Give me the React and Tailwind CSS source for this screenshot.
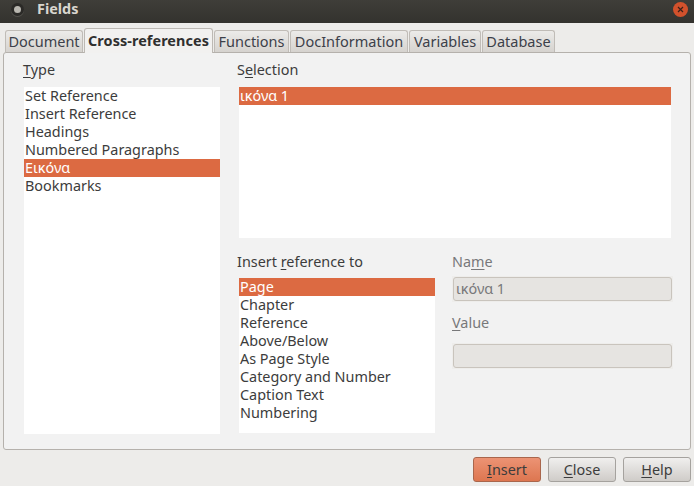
const font = { fontFamily: '"Noto Sans", "Open Sans", sans-serif' };

function U({ children }) {
  return <span className="underline decoration-1 underline-offset-2">{children}</span>;
}

function Tab({ children, active, w }) {
  return active ? (
    <div className={"h-[25px] -mt-[2px] mb-[-1px] relative z-10 flex items-center justify-center bg-[#f2f1f0] border border-b-0 border-[#bdb9b4] rounded-t-[3px] font-bold text-[#2f2f2f] text-[14.4px] tracking-[0.08px] " + w}>
      {children}
    </div>
  ) : (
    <div className={"h-[22px] flex items-center justify-center bg-gradient-to-b from-[#ecebe9] to-[#d6d3cf] border border-b-0 border-[#c0bcb7] rounded-t-[3px] text-[#3c4049] text-[14.5px] " + w}>
      {children}
    </div>
  );
}

function ListBox({ items, selected, className }) {
  return (
    <div className={"bg-white text-[14.4px] leading-[18px] text-[#3c3c3c] " + className}>
      {items.map((t, i) => (
        <div key={i} className={"h-[18px] pl-px whitespace-nowrap " + (i === selected ? "bg-[#dc6a42] text-white" : "")}>
          {t}
        </div>
      ))}
    </div>
  );
}

function Btn({ children, primary }) {
  return (
    <div
      className={
        "w-[68px] h-[25px] flex items-center justify-center rounded-[3px] border text-[14.4px] " +
        (primary
          ? "border-[#a9664c] bg-gradient-to-b from-[#ec9374] to-[#dd7650] text-[#3c3c3c]"
          : "border-[#a5a29e] bg-gradient-to-b from-[#f0efee] to-[#cfccc8] text-[#3c3c3c]")
      }
    >
      <span>{children}</span>
    </div>
  );
}

function Field({ children }) {
  return (
    <div className="h-[26px] p-px bg-[#eeedeb]">
      <div className="h-full bg-[#e6e4e1] border border-[#c9c4bd] rounded-[3px] flex items-center pl-[2px]">{children}</div>
    </div>
  );
}

export default function App() {
  return (
    <div style={font} className="w-[694px] h-[486px] bg-[#edecea] overflow-hidden flex flex-col">
      <div className="h-[23px] shrink-0 bg-gradient-to-b from-[#3f3e39] to-[#33322e] flex items-start justify-between pl-[11px] pr-[6px] pt-[2px]">
        <div className="flex items-center gap-[13px] h-[15px]">
          <div className="w-[13px] h-[13px] rounded-full bg-[#2b2a27] flex items-center justify-center shadow-[0_1px_0_#55544f]">
            <div className="w-[7px] h-[7px] rounded-full bg-[#b9b7b0]" />
          </div>
          <span className="text-[14.4px] font-bold text-[#d9d6ce] leading-none">Fields</span>
        </div>
        <div className="w-[15px] h-[15px] rounded-full bg-[#d2512c] flex items-center justify-center">
          <svg width="7" height="7" viewBox="0 0 7 7">
            <path d="M1 1 L6 6 M6 1 L1 6" stroke="#3a2018" strokeWidth="1.2" />
          </svg>
        </div>
      </div>

      <div className="flex pl-[5px] pt-[7px] gap-px h-[29px] shrink-0 items-start">
        <Tab w="w-[78px]">Document</Tab>
        <Tab active w="w-[129px]">Cross-references</Tab>
        <Tab w="w-[75px]">Functions</Tab>
        <Tab w="w-[118px]">DocInformation</Tab>
        <Tab w="w-[72px]">Variables</Tab>
        <Tab w="w-[73px]">Database</Tab>
      </div>

      <div className="mx-[3px] w-[688px] h-[398px] shrink-0 bg-[#f2f2f2] border border-[#b5b1ac] rounded-[3px] flex pl-[20px] pt-[8px] gap-[19px]">
        <div className="w-[196px] shrink-0 flex flex-col">
          <div className="h-[18px] text-[14.4px] leading-[18px] text-[#3c3c3c] -ml-px mb-[8px]"><U>T</U>ype</div>
          <ListBox className="h-[347px]" selected={4} items={["Set Reference", "Insert Reference", "Headings", "Numbered Paragraphs", "Εικόνα", "Bookmarks"]} />
        </div>

        <div className="w-[432px] shrink-0 flex flex-col">
          <div className="h-[18px] text-[14.4px] leading-[18px] text-[#3c3c3c] -ml-[2px] mb-[8px]">S<U>e</U>lection</div>
          <ListBox className="h-[151px]" selected={0} items={["ικόνα 1"]} />

          <div className="flex gap-[17px] mt-[15px]">
            <div className="w-[196px] shrink-0 flex flex-col">
              <div className="h-[18px] text-[14.4px] leading-[18px] text-[#3c3c3c] -ml-[2px] mb-[7px]">Insert <U>r</U>eference to</div>
              <ListBox className="h-[155px]" selected={0} items={["Page", "Chapter", "Reference", "Above/Below", "As Page Style", "Category and Number", "Caption Text", "Numbering"]} />
            </div>
            <div className="w-[221px] shrink-0 flex flex-col text-[14.4px] text-[#78787a]">
              <div className="h-[18px] leading-[18px] mb-[5px]">Na<U>m</U>e</div>
              <Field>ικόνα 1</Field>
              <div className="h-[18px] leading-[18px] mt-[12px] mb-[11px]"><U>V</U>alue</div>
              <Field />
            </div>
          </div>
        </div>
      </div>

      <div className="flex justify-end gap-[7px] pr-[3px] pt-[7px]">
        <Btn primary><U>I</U>nsert</Btn>
        <Btn><U>C</U>lose</Btn>
        <Btn><U>H</U>elp</Btn>
      </div>
    </div>
  );
}
